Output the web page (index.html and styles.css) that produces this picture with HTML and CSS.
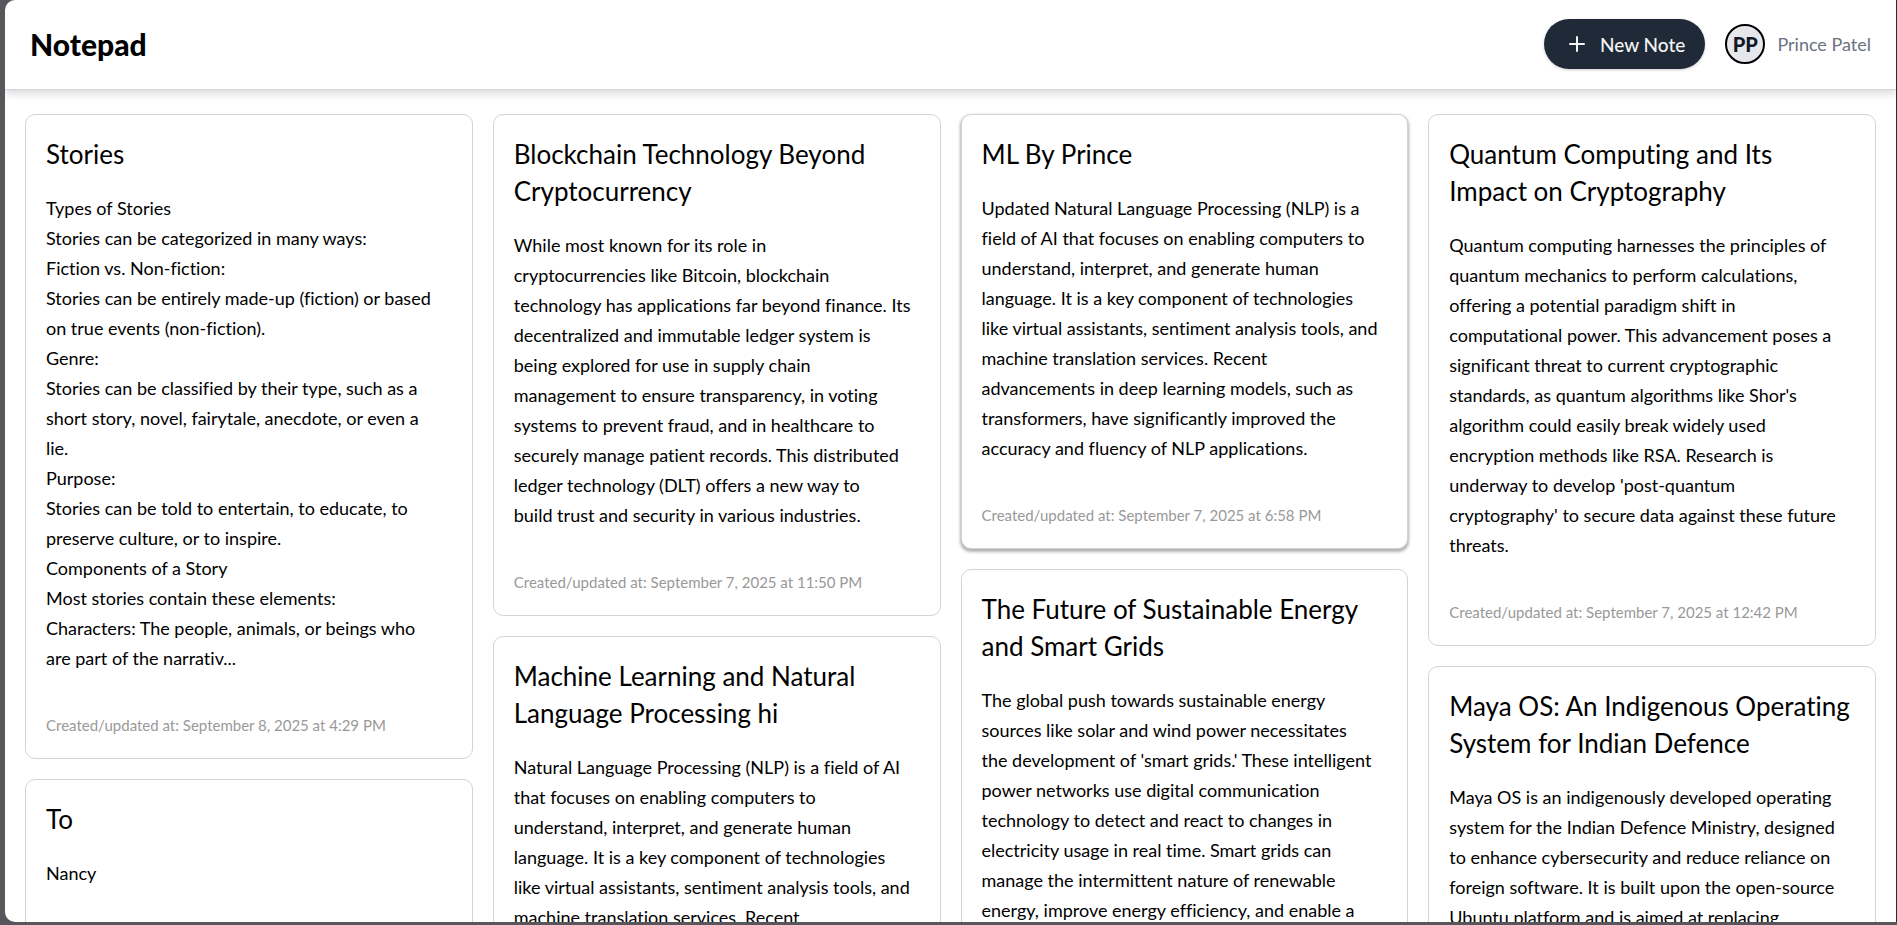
FILE: index.html
```html
<!DOCTYPE html>
<html lang="en">
<head>
<meta charset="utf-8">
<meta name="viewport" content="width=device-width, initial-scale=1">
<title>Notepad</title>
<link rel="stylesheet" href="styles.css">
</head>
<body>
<div class="app">
<header class="header">
<h1 class="brand">Notepad</h1>
<div class="actions">
<button class="new-note" type="button"><svg class="plus" viewBox="0 0 16 16" aria-hidden="true"><path d="M8 1v14M1 8h14"/></svg>New Note</button>
<div class="user"><span class="avatar">PP</span><span class="user-name">Prince Patel</span></div>
</div>
</header>
<main class="board">
<div class="column">
<article class="note">
<h2 class="note-title">Stories</h2>
<p class="note-body">Types of Stories
Stories can be categorized in many ways:
Fiction vs. Non-fiction:
Stories can be entirely made-up (fiction) or based
on true events (non-fiction).
Genre:
Stories can be classified by their type, such as a
short story, novel, fairytale, anecdote, or even a
lie.
Purpose:
Stories can be told to entertain, to educate, to
preserve culture, or to inspire.
Components of a Story
Most stories contain these elements:
Characters: The people, animals, or beings who
are part of the narrativ...</p>
<p class="note-date">Created/updated at: September 8, 2025 at 4:29 PM</p>
</article>
<article class="note">
<h2 class="note-title">To</h2>
<p class="note-body">Nancy

</p>
<p class="note-date"></p>
</article>
</div>
<div class="column">
<article class="note">
<h2 class="note-title">Blockchain Technology Beyond
Cryptocurrency</h2>
<p class="note-body">While most known for its role in
cryptocurrencies like Bitcoin, blockchain
technology has applications far beyond finance. Its
decentralized and immutable ledger system is
being explored for use in supply chain
management to ensure transparency, in voting
systems to prevent fraud, and in healthcare to
securely manage patient records. This distributed
ledger technology (DLT) offers a new way to
build trust and security in various industries.</p>
<p class="note-date">Created/updated at: September 7, 2025 at 11:50 PM</p>
</article>
<article class="note">
<h2 class="note-title">Machine Learning and Natural
Language Processing hi</h2>
<p class="note-body">Natural Language Processing (NLP) is a field of AI
that focuses on enabling computers to
understand, interpret, and generate human
language. It is a key component of technologies
like virtual assistants, sentiment analysis tools, and
machine translation services. Recent</p>
</article>
</div>
<div class="column">
<article class="note note-active">
<h2 class="note-title">ML By Prince</h2>
<p class="note-body">Updated Natural Language Processing (NLP) is a
field of AI that focuses on enabling computers to
understand, interpret, and generate human
language. It is a key component of technologies
like virtual assistants, sentiment analysis tools, and
machine translation services. Recent
advancements in deep learning models, such as
transformers, have significantly improved the
accuracy and fluency of NLP applications.</p>
<p class="note-date">Created/updated at: September 7, 2025 at 6:58 PM</p>
</article>
<article class="note">
<h2 class="note-title">The Future of Sustainable Energy
and Smart Grids</h2>
<p class="note-body">The global push towards sustainable energy
sources like solar and wind power necessitates
the development of 'smart grids.' These intelligent
power networks use digital communication
technology to detect and react to changes in
electricity usage in real time. Smart grids can
manage the intermittent nature of renewable
energy, improve energy efficiency, and enable a</p>
</article>
</div>
<div class="column">
<article class="note">
<h2 class="note-title">Quantum Computing and Its
Impact on Cryptography</h2>
<p class="note-body">Quantum computing harnesses the principles of
quantum mechanics to perform calculations,
offering a potential paradigm shift in
computational power. This advancement poses a
significant threat to current cryptographic
standards, as quantum algorithms like Shor's
algorithm could easily break widely used
encryption methods like RSA. Research is
underway to develop 'post-quantum
cryptography' to secure data against these future
threats.</p>
<p class="note-date">Created/updated at: September 7, 2025 at 12:42 PM</p>
</article>
<article class="note">
<h2 class="note-title">Maya OS: An Indigenous Operating
System for Indian Defence</h2>
<p class="note-body">Maya OS is an indigenously developed operating
system for the Indian Defence Ministry, designed
to enhance cybersecurity and reduce reliance on
foreign software. It is built upon the open-source
Ubuntu platform and is aimed at replacing</p>
</article>
</div>
</main>
</div>
</body>
</html>
```
FILE: styles.css
```css
* { box-sizing: border-box; }
body {
  margin: 0;
  height: 100vh;
  padding: 0 0 3px 5px;
  overflow: hidden;
  background: #56565b;
  color: #000;
  font-family: "Gill Sans", "Gill Sans MT", Lato, sans-serif;
  font-variant-ligatures: no-common-ligatures;
}
h1, h2, p { margin: 0; font-weight: 400; }
.app {
  height: 100%;
  overflow: hidden;
  background: #fff;
  border-right: 1px solid #2b2b2e;
  border-radius: 10px 0 0 10px;
}
.header {
  display: flex;
  align-items: center;
  justify-content: space-between;
  padding: 19px 25px 20px;
  border-bottom: 1px solid #d1d5db;
  box-shadow: 0 4px 8px rgba(0, 0, 0, 0.14);
}
.brand { font-size: 30px; line-height: 36px; font-weight: 900; }
.actions { display: flex; align-items: center; gap: 20px; }
.new-note {
  display: flex;
  align-items: center;
  gap: 15px;
  height: 50px;
  padding: 0 20px 0 25px;
  border: 0;
  border-radius: 25px;
  background: #1f2937;
  color: #f3f4f6;
  font: 500 19px "Gill Sans", "Gill Sans MT", Lato, sans-serif;
  box-shadow: 0 1px 3px rgba(0, 0, 0, 0.2);
}
.plus { width: 16px; height: 16px; fill: none; stroke: currentColor; stroke-width: 2; stroke-linecap: round; }
.user { display: flex; align-items: center; gap: 12px; }
.avatar {
  display: grid;
  place-items: center;
  width: 40px;
  height: 40px;
  border: 2px solid #000;
  border-radius: 50%;
  background: #e5e7eb;
  color: #111827;
  font-size: 20px;
  font-weight: 900;
}
.user-name { color: #6b7280; font-size: 18px; }
.board {
  display: grid;
  grid-template-columns: repeat(4, minmax(0, 1fr));
  gap: 20px;
  padding: 24px 20px;
}
.column { display: flex; flex-direction: column; gap: 20px; }
.note {
  padding: 21px 20px 20px;
  border: 1px solid #d3d3d3;
  border-radius: 10px;
  background: #fff;
}
.note-active { box-shadow: 0 2px 3px 1px rgba(0, 0, 0, 0.3); }
.note-title { font-size: 26px; line-height: 37px; white-space: pre-line; }
.note-body { margin-top: 20px; font-size: 18px; line-height: 30px; white-space: pre-line; }
.note-date { margin-top: 39px; color: #999; font-size: 15px; line-height: 26px; }
```
